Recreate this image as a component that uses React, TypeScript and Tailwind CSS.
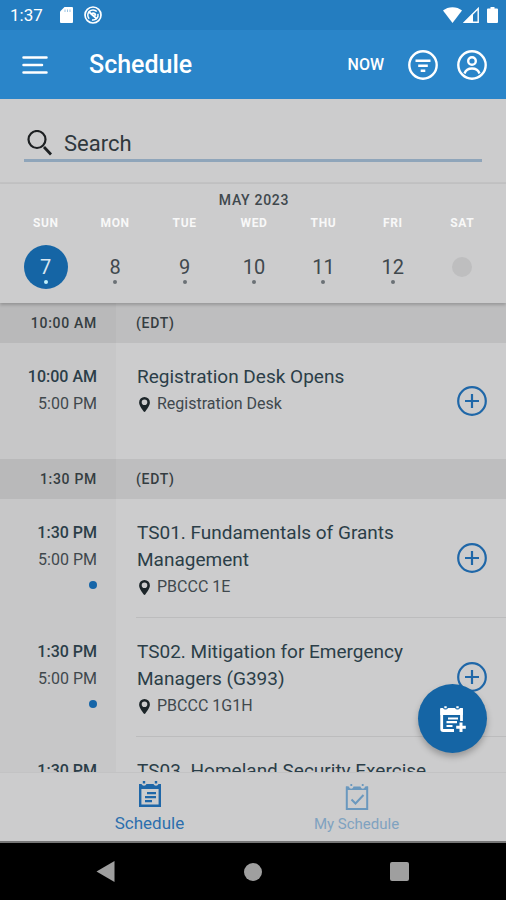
import React, { useState } from 'react';

type Session = {
  start: string;
  end: string;
  title: string;
  room: string;
  dot?: boolean;
};

const days = [
  { name: 'SUN', date: 7 },
  { name: 'MON', date: 8 },
  { name: 'TUE', date: 9 },
  { name: 'WED', date: 10 },
  { name: 'THU', date: 11 },
  { name: 'FRI', date: 12 },
  { name: 'SAT', date: null },
];

const groups: { time: string; sessions: Session[] }[] = [
  {
    time: '10:00 AM',
    sessions: [
      { start: '10:00 AM', end: '5:00 PM', title: 'Registration Desk Opens', room: 'Registration Desk' },
    ],
  },
  {
    time: '1:30 PM',
    sessions: [
      { start: '1:30 PM', end: '5:00 PM', title: 'TS01. Fundamentals of Grants Management', room: 'PBCCC 1E', dot: true },
      { start: '1:30 PM', end: '5:00 PM', title: 'TS02. Mitigation for Emergency Managers (G393)', room: 'PBCCC 1G1H', dot: true },
      { start: '1:30 PM', end: '5:00 PM', title: 'TS03. Homeland Security Exercise', room: 'PBCCC 1F', dot: true },
    ],
  },
];

const StatusBar = () => (
  <div className="flex h-[30px] shrink-0 items-center bg-[#247dc0] pl-[10px] pr-2 text-white">
    <span className="text-[17px] leading-5">1:37</span>
    <svg className="ml-[17px] h-4 w-[13px]" viewBox="0 0 13 16" fill="currentColor">
      <path d="M4.5 0H12a1 1 0 0 1 1 1v14a1 1 0 0 1-1 1H1a1 1 0 0 1-1-1V4.500z" />
      <path d="M5 2.500v2.500M7.500 2.500v2.500M10 2.500v2.500" stroke="#247dc0" strokeWidth="1" opacity=".45" />
    </svg>
    <svg className="ml-[11px] size-[18px]" viewBox="0 0 18 18" fill="none" stroke="currentColor">
      <circle cx="9" cy="9" r="8" strokeWidth="1.700" />
      <path d="M5.200 12.800A5.200 5.200 0 0 1 12.800 5.600M14 7.800A5.200 5.200 0 0 1 8 14" strokeWidth="1.500" />
      <path d="M4.500 5.500l8.500 7.500M7.500 8.500a2 2 0 0 1 3.800 1.200" strokeWidth="1.800" />
    </svg>
    <svg className="ml-auto h-4 w-[19px]" viewBox="0 0 19 16" fill="currentColor">
      <path d="M0 3.600C5-1 14-1 19 3.600L9.500 16z" />
    </svg>
    <svg className="ml-[1px] size-4" viewBox="0 0 16 16">
      <path d="M1.500 15.200L15.200 1.500V15.200z" fill="none" stroke="currentColor" strokeWidth="1.400" />
      <path d="M1 15.500L10 6.500V15.500z" fill="currentColor" />
    </svg>
    <svg className="ml-2 h-4 w-[11px]" viewBox="0 0 11 16" fill="currentColor">
      <path d="M3.500 0h4v1.500H10a1 1 0 0 1 1 1V15a1 1 0 0 1-1 1H1a1 1 0 0 1-1-1V2.500a1 1 0 0 1 1-1h2.500z" />
    </svg>
  </div>
);

const Header = () => (
  <header className="flex h-[69px] shrink-0 items-center bg-[#2a85c9] pl-[22px] pr-[19px] text-white">
    <button aria-label="Menu">
      <svg className="h-5 w-[26px]" viewBox="0 0 26 20" fill="none" stroke="currentColor" strokeWidth="2.500" strokeLinecap="round">
        <path d="M1.500 2.500h23M1.500 10h18.500M1.500 17.500h23" />
      </svg>
    </button>
    <h1 className="ml-[41px] text-[25px] leading-8 font-medium">Schedule</h1>
    <button className="ml-auto text-base font-medium">NOW</button>
    <button aria-label="Filter" className="ml-6">
      <svg className="size-[30px]" viewBox="0 0 30 30" fill="none" stroke="currentColor" strokeWidth="2.400">
        <circle cx="15" cy="15" r="13.700" />
        <path d="M7.500 10.700h15M10.200 15.700h9.600M12.700 20.700h4.600" strokeWidth="2.600" />
      </svg>
    </button>
    <button aria-label="Profile" className="ml-[19px]">
      <svg className="size-[30px]" viewBox="0 0 30 30" fill="none" stroke="currentColor" strokeWidth="2.400">
        <circle cx="15" cy="15" r="13.700" />
        <circle cx="15" cy="11" r="3.800" />
        <path d="M7.500 23.500c1.200-3.400 4-5 7.500-5s6.300 1.600 7.500 5" />
      </svg>
    </button>
  </header>
);

const PinIcon = () => (
  <svg className="h-[15px] w-[11px]" viewBox="0 0 11 15" fill="#1c2529">
    <path fillRule="evenodd" d="M5.500 0A5.400 5.400 0 0 1 10.900 5.400C10.900 9 7.500 12.200 6.300 14.400a.9.9 0 0 1-1.600 0C3.500 12.200.1 9 .1 5.400A5.400 5.400 0 0 1 5.500 0zm0 2.400a2.800 2.800 0 1 0 0 5.600 2.800 2.800 0 0 0 0-5.600z" />
  </svg>
);

const SessionRow = ({ session, last }: { session: Session; last: boolean }) => (
  <li className="flex">
    <div className="w-[116px] shrink-0 bg-[#c7c7c8] pt-5 pr-[19px] text-right text-base leading-[27px]">
      <p className="font-medium text-[#2b3e48]">{session.start}</p>
      <p className="text-[#40484d]">{session.end}</p>
      {session.dot && <span className="mt-2 inline-block size-2 rounded-full bg-[#1565a8] align-top" />}
    </div>
    <div className={`ml-5 flex min-h-[116px] flex-1 items-center pr-[19px] pl-px ${last ? '' : 'border-b border-[#bcbcbd]'}`}>
      <div className="flex-1 self-start pt-5 pb-4">
        <h2 className="pr-6 text-[19px] leading-[27px] text-[#2b3e48]">{session.title}</h2>
        <p className="flex items-center gap-[7px] pl-[2px] text-base leading-7 text-[#40484d]">
          <PinIcon />
          {session.room}
        </p>
      </div>
      <button aria-label={`Add ${session.title}`}>
        <svg className="size-[30px]" viewBox="0 0 30 30" fill="none" stroke="#1f67a8" strokeWidth="2.200">
          <circle cx="15" cy="15" r="13.800" />
          <path d="M15 8v14M8 15h14" />
        </svg>
      </button>
    </div>
  </li>
);

const App = () => {
  const [query, setQuery] = useState('');
  const [selected, setSelected] = useState(7);

  return (
    <div className="flex h-screen flex-col bg-[#cccccd] font-['Roboto',sans-serif]">
      <StatusBar />
      <Header />

      <div className="shrink-0 border-b-2 border-[#c2c2c3] px-6 pt-[30px] pb-5">
        <label className="flex items-center border-b-[3px] border-[#8fa5ba] pb-[2px] pl-[3px]">
          <svg className="size-[26px]" viewBox="0 0 26 26" fill="none" stroke="#1d2022">
            <circle cx="10" cy="9.500" r="8.500" strokeWidth="2.200" />
            <path d="M17 17l7 7.500" strokeWidth="2.800" />
          </svg>
          <input
            type="text"
            aria-label="Search"
            placeholder="Search"
            value={query}
            onChange={(e) => setQuery(e.target.value)}
            className="ml-[11px] h-7 min-w-0 flex-1 bg-transparent text-[22px] text-[#2f383d] outline-none placeholder:text-[#2f383d]"
          />
        </label>
      </div>

      <section className="relative z-10 shrink-0 pt-[7px] pr-[9px] pb-[14px] pl-[11px] shadow-[0_2px_3px_rgba(0,0,0,0.2)]">
        <p className="text-center text-sm leading-[18px] font-medium tracking-wider text-[#40484d]">MAY 2023</p>
        <div className="mt-[5px] grid grid-cols-7">
          {days.map((day) => (
            <div key={day.name} className="flex flex-col items-center">
              <span className="text-xs leading-[18px] font-bold tracking-wider text-[#f8f8f8]">{day.name}</span>
              {day.date ? (
                <button
                  onClick={() => setSelected(day.date)}
                  className={`mt-[13px] flex size-11 flex-col items-center rounded-full pt-[9px] ${
                    day.date === selected ? 'bg-[#1565a5] text-[#d9e6f0]' : 'text-[#40484d]'
                  }`}
                >
                  <span className="text-xl leading-[26px]">{day.date}</span>
                  <span className={`size-1 rounded-full ${day.date === selected ? 'bg-[#bff0fb]' : 'bg-[#6b7175]'}`} />
                </button>
              ) : (
                <div className="mt-[13px] flex size-11 items-center justify-center">
                  <div className="size-5 rounded-full bg-[#bebebf]" />
                </div>
              )}
            </div>
          ))}
        </div>
      </section>

      <main className="relative flex min-h-0 flex-1 flex-col">
        <div className="min-h-0 flex-1 overflow-hidden">
          {groups.map((group) => (
            <section key={group.time}>
              <div className="flex h-10 items-center bg-[#bebebf] text-sm font-medium tracking-wider text-[#353d41]">
                <div className="flex h-full w-[116px] items-center justify-end bg-[#b9b9ba] pr-[19px]">{group.time}</div>
                <div className="pl-5">(EDT)</div>
              </div>
              <ul>
                {group.sessions.map((session, i) => (
                  <SessionRow key={session.title} session={session} last={i === group.sessions.length - 1} />
                ))}
              </ul>
            </section>
          ))}
        </div>
        <button
          aria-label="Add event"
          className="absolute right-[19px] bottom-[19px] flex size-[69px] items-center justify-center rounded-full bg-[#1565a5] shadow-[0_4px_6px_rgba(0,0,0,0.25)]"
        >
          <svg className="size-7" viewBox="0 0 28 28" fill="none" stroke="#fff">
            <path d="M15 25.500H4.200a1.500 1.500 0 0 1-1.500-1.500V4M22.500 4v12" strokeWidth="2.800" />
            <path d="M1.300 3H4a2.800 2.800 0 0 0 5 0h7a2.800 2.800 0 0 0 5 0h2.900v7H1.300z" fill="#fff" stroke="none" />
            <path d="M6.500 1.200v2M18.500 1.200v2" strokeWidth="2.400" />
            <path d="M9 13.500h10M7.500 17.200h10.500M7.500 21h6" strokeWidth="2.200" />
            <path d="M22 17.500v9.500M17.200 22.200h9.600" strokeWidth="3" />
          </svg>
        </button>
      </main>

      <nav className="flex h-[69px] shrink-0 justify-center border-t border-[#c3c3c4]">
        <a href="#schedule" className="flex w-[207px] flex-col items-center pt-[7px] text-[17px] leading-6 text-[#2c6fae]">
          <svg className="mb-[3px] h-7 w-6" viewBox="0 0 24 28" fill="none" stroke="#1f67a8">
            <path d="M2.200 5v20.800h19.600V5" strokeWidth="2.400" />
            <path d="M1 4h2.500a2.700 2.700 0 0 0 5 0h7a2.700 2.700 0 0 0 5 0H23v5H1z" fill="#1f67a8" stroke="none" />
            <path d="M6 1v2.500M18 1v2.500" strokeWidth="2.400" />
            <path d="M9 13.200h9M7 17.200h11M7 21.200h7" strokeWidth="2.200" />
          </svg>
          Schedule
        </a>
        <a href="#my-schedule" className="flex w-[207px] flex-col items-center pt-[10px] text-[15px] leading-6 text-[#7fa2c0]">
          <svg className="mb-px h-7 w-6" viewBox="0 0 24 28" fill="none" stroke="#6a98be">
            <path d="M1.800 3.500v22.500h20.400V3.500" strokeWidth="2" />
            <path d="M1 3.500h3c.5 3 3.800 3 4.500 0h7c.7 3 4 3 4.500 0h3V7H1z" fill="#6a98be" stroke="none" />
            <path d="M6.300 1v2M17.700 1v2" strokeWidth="1.800" />
            <path d="M6.500 16.500l4 4 8-8.500" strokeWidth="2" />
          </svg>
          My Schedule
        </a>
      </nav>

      <div className="grid h-[59px] shrink-0 grid-cols-[1fr_40px_1fr] items-center border-t-2 border-[#777] bg-black">
        <button aria-label="Back" className="ml-[96px]">
          <svg className="h-[21px] w-[19px]" viewBox="0 0 19 21" fill="#9f9f9f">
            <path d="M18.500 0v21L.5 10.500z" />
          </svg>
        </button>
        <button aria-label="Home" className="mx-auto size-[18px] rounded-full bg-[#9f9f9f]" />
        <button aria-label="Recent apps" className="mr-[97px] ml-auto size-[19px] rounded-xs bg-[#9f9f9f]" />
      </div>
    </div>
  );
};

export default App;
